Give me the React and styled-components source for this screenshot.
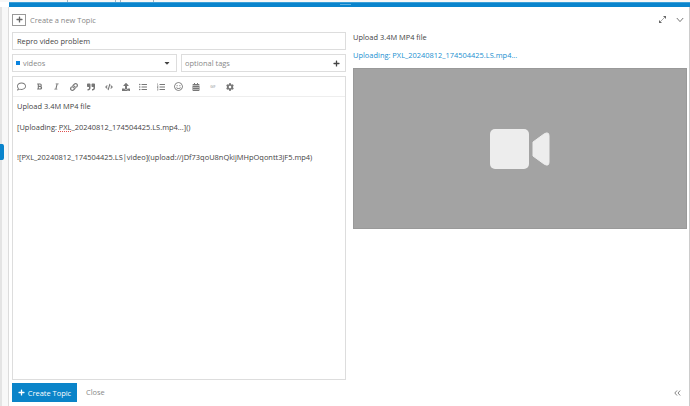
import React from "react";
import styled, { createGlobalStyle } from "styled-components";
import {
    FaRegComment,
    FaBold,
    FaItalic,
    FaLink,
    FaQuoteRight,
    FaCode,
    FaUpload,
    FaListUl,
    FaListOl,
    FaRegSmile,
    FaCalendarAlt,
    FaCog,
    FaPlus,
    FaCaretDown,
} from "react-icons/fa";

const GlobalStyle = createGlobalStyle`
    html, body {
        margin: 0;
        padding: 0;
        background: #fff;
    }
    body {
        font-family: "Open Sans", "Liberation Sans", sans-serif;
        font-size: 7.45px;
        color: #444;
    }
`;

const tools = [
    [FaRegComment, 9],
    [FaBold, 7],
    [FaItalic, 7],
    [FaLink, 8],
    [FaQuoteRight, 8],
    [FaCode, 8],
    [FaUpload, 8],
    [FaListUl, 8],
    [FaListOl, 8],
    [FaRegSmile, 9],
    [FaCalendarAlt, 8],
    "GIF",
    [FaCog, 8],
];

const ticks = [7, 47, 4, 32];

const VideoIcon = () => (
    <svg width="60" height="40" viewBox="0 0 60 40">
        <rect x="0" y="0" width="39" height="40" rx="5" fill="#ededed" />
        <path
            d="M43 13 L54 5 Q59 2 59 7 V33 Q59 38 54 35 L43 27 Z"
            fill="#ededed"
            stroke="#ededed"
            strokeLinejoin="round"
        />
    </svg>
);

const ExpandIcon = () => (
    <svg width="9" height="9" viewBox="0 0 9 9">
        <path
            d="M2.5 6.5 L6.5 2.5"
            fill="none"
            stroke="#888"
            strokeWidth="0.7"
        />
        <path d="M5 1 H8 V4 Z" fill="#666" />
        <path d="M1 5 V8 H4 Z" fill="#666" />
    </svg>
);

const ChevronIcon = () => (
    <svg width="8" height="6" viewBox="0 0 8 6">
        <path
            d="M0.8 1 L4 4.6 L7.2 1"
            fill="none"
            stroke="#666"
            strokeWidth="0.9"
        />
    </svg>
);

const DoubleLeftIcon = () => (
    <svg width="7" height="6" viewBox="0 0 7 6">
        <path
            d="M3 0.5 L0.8 3 L3 5.5 M6.2 0.5 L4 3 L6.2 5.5"
            fill="none"
            stroke="#777"
            strokeWidth="0.9"
        />
    </svg>
);

const App = () => (
    <Page>
        <GlobalStyle />
        <TopStrip>
            {ticks.map((width, key) => (
                <Tick key={key} $width={width} />
            ))}
        </TopStrip>
        <BlueBar>
            <Grip />
        </BlueBar>
        <Body>
            <Gutter>
                <GripTab />
            </Gutter>
            <Composer>
                <Header>
                    <Action>
                        <PlusBox>
                            <FaPlus size={7} />
                        </PlusBox>
                        Create a new Topic
                    </Action>
                    <HeaderIcons>
                        <ExpandIcon />
                        <ChevronIcon />
                    </HeaderIcons>
                </Header>
                <Columns>
                    <Editor>
                        <TitleInput>Repro video problem</TitleInput>
                        <FieldRow>
                            <Field>
                                <CategorySquare />
                                <Muted>videos</Muted>
                                <Caret>
                                    <FaCaretDown size={8} />
                                </Caret>
                            </Field>
                            <Field>
                                <Muted>optional tags</Muted>
                                <Caret>
                                    <FaPlus size={7} />
                                </Caret>
                            </Field>
                        </FieldRow>
                        <EditorBox>
                            <Toolbar>
                                {tools.map((tool, key) =>
                                    tool === "GIF" ? (
                                        <Tool key={key}>
                                            <Gif>GIF</Gif>
                                        </Tool>
                                    ) : (
                                        <Tool key={key}>
                                            {React.createElement(tool[0], {
                                                size: tool[1],
                                            })}
                                        </Tool>
                                    )
                                )}
                            </Toolbar>
                            <Text>
                                <Line>Upload 3.4M MP4 file</Line>
                                <Line />
                                <Line>
                                    [Uploading: <Misspelled>PXL</Misspelled>
                                    _20240812_174504425.LS.mp4...]()
                                </Line>
                                <Line />
                                <Line />
                                <Line>
                                    ![PXL_20240812_174504425.LS|video](upload://jDf73qoU8nQkijMHpOqontt3jF5.mp4)
                                </Line>
                            </Text>
                        </EditorBox>
                    </Editor>
                    <Preview>
                        <PreviewTitle>Upload 3.4M MP4 file</PreviewTitle>
                        <PreviewLink>
                            Uploading: PXL_20240812_174504425.LS.mp4...
                        </PreviewLink>
                        <VideoBox>
                            <VideoIcon />
                        </VideoBox>
                    </Preview>
                </Columns>
                <Footer>
                    <Submit>
                        <FaPlus size={7} />
                        Create Topic
                    </Submit>
                    <Close>Close</Close>
                    <Collapse>
                        <DoubleLeftIcon />
                    </Collapse>
                </Footer>
            </Composer>
        </Body>
    </Page>
);

const Page = styled.div`
    width: 690px;
    height: 406px;
    display: flex;
    flex-direction: column;
    overflow: hidden;
    background: #fff;
`;

const TopStrip = styled.div`
    height: 2px;
    flex: none;
    background: #f7f7f7;
    padding-left: 60px;
    display: flex;
`;

const Tick = styled.div`
    width: ${(props) => props.$width}px;
    border-right: 1px solid #9fb4c2;
`;

const BlueBar = styled.div`
    height: 5px;
    flex: none;
    margin-left: 9px;
    background: #0a84cc;
    border-top: 1px solid #3a9fd8;
    box-sizing: border-box;
    display: flex;
    justify-content: center;
`;

const Grip = styled.div`
    width: 11px;
    height: 1px;
    margin: 1px 0 0 -9px;
    background: #5fb0e0;
`;

const Body = styled.div`
    flex: 1;
    display: flex;
    min-height: 0;
    border-right: 1px solid #ccc;
`;

const Gutter = styled.div`
    width: 9px;
    flex: none;
    box-sizing: border-box;
    padding-top: 137px;
    background: #f8f8f8;
    border-left: 2px solid #e4e4e4;
    border-right: 1px solid #dcdcdc;
`;

const GripTab = styled.div`
    width: 2px;
    height: 16px;
    margin-left: -2px;
    box-sizing: content-box;
    border-right: 2px solid #0a84cc;
    background: #0a84cc;
    border-radius: 0 2px 2px 0;
`;

const Composer = styled.div`
    flex: 1;
    min-width: 0;
    display: flex;
    flex-direction: column;
    padding: 0 2px 0 3px;
`;

const Header = styled.div`
    height: 25px;
    flex: none;
    display: flex;
    align-items: center;
    justify-content: space-between;
    padding-right: 3px;
`;

const Action = styled.div`
    display: flex;
    align-items: center;
    gap: 4px;
    color: #888;
`;

const PlusBox = styled.div`
    width: 12px;
    height: 10px;
    border: 1px solid #999;
    display: flex;
    align-items: center;
    justify-content: center;
    color: #666;
`;

const HeaderIcons = styled.div`
    display: flex;
    align-items: center;
    gap: 9px;
`;

const Columns = styled.div`
    flex: 1;
    min-height: 0;
    display: flex;
    gap: 7px;
`;

const Editor = styled.div`
    width: 334px;
    flex: none;
    display: flex;
    flex-direction: column;
    gap: 4px;
`;

const TitleInput = styled.div`
    height: 16px;
    flex: none;
    border: 1px solid #ddd;
    padding: 0 4px;
    line-height: 16px;
`;

const FieldRow = styled.div`
    display: flex;
    flex: none;
    gap: 4px;
`;

const Field = styled.div`
    flex: 1;
    height: 16px;
    border: 1px solid #ddd;
    display: flex;
    align-items: center;
    padding: 0 3px;
`;

const CategorySquare = styled.span`
    width: 4px;
    height: 4px;
    background: #0a84e0;
    margin-right: 3px;
`;

const Muted = styled.span`
    color: #888;
`;

const Caret = styled.span`
    margin-left: auto;
    display: flex;
    padding-right: 2px;
    color: #444;
`;

const EditorBox = styled.div`
    flex: 1;
    min-height: 0;
    border: 1px solid #ddd;
    display: flex;
    flex-direction: column;
`;

const Toolbar = styled.div`
    height: 19px;
    flex: none;
    border-bottom: 1px solid #eee;
    display: flex;
    align-items: center;
`;

const Tool = styled.div`
    width: 17.4px;
    display: flex;
    justify-content: center;
    color: #777;
`;

const Gif = styled.span`
    font-size: 3.5px;
    color: #888;
`;

const Text = styled.div`
    padding: 4px 4px;
    line-height: 10.3px;
`;

const Line = styled.div`
    min-height: 10.3px;
    white-space: nowrap;
`;

const Misspelled = styled.span`
    text-decoration: underline dotted #e05050;
    text-underline-offset: 1px;
`;

const Preview = styled.div`
    flex: 1;
    min-width: 0;
`;

const PreviewTitle = styled.div`
    height: 10px;
    line-height: 10px;
`;

const PreviewLink = styled.div`
    margin-top: 8px;
    height: 10px;
    line-height: 10px;
    color: #1b8fd0;
`;

const VideoBox = styled.div`
    margin-top: 8px;
    height: 159px;
    background: #a3a3a3;
    border: 1px solid #999;
    display: flex;
    align-items: center;
    justify-content: center;
`;

const Footer = styled.div`
    height: 26px;
    flex: none;
    box-sizing: border-box;
    padding: 3px 5px 0 0;
    display: flex;
    align-items: flex-start;
`;

const Submit = styled.div`
    width: 65px;
    height: 19px;
    background: #0a84c9;
    color: #fff;
    display: flex;
    align-items: center;
    justify-content: center;
    gap: 3px;
`;

const Close = styled.div`
    margin-left: 9px;
    line-height: 19px;
    color: #888;
`;

const Collapse = styled.div`
    margin-left: auto;
    height: 19px;
    display: flex;
    align-items: center;
    padding-right: 1px;
`;

export default App;
